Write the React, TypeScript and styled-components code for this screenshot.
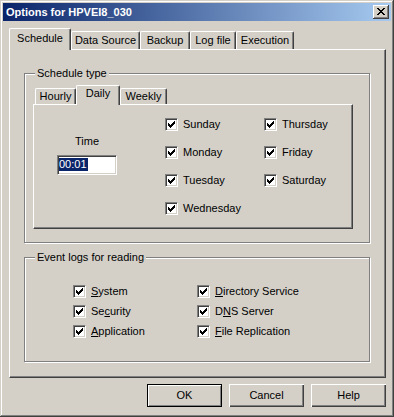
import React from "react";
import styled, { createGlobalStyle } from "styled-components";

const GlobalStyle = createGlobalStyle`
  body {
    margin: 0;
    background: #d4d0c8;
  }
`;

const FACE = "#d4d0c8";
const SHADOW = "#808080";
const DARK = "#404040";

const Window = styled.div`
  width: 394px;
  height: 417px;
  box-sizing: border-box;
  padding: 3px;
  background: ${FACE};
  box-shadow: inset -1px -1px ${DARK}, inset 1px 1px ${FACE},
    inset -2px -2px ${SHADOW}, inset 2px 2px #fff;
  font-family: "Liberation Sans", Arial, sans-serif;
  font-size: 11px;
  line-height: 13px;
  color: #000;
`;

const TitleBar = styled.div`
  height: 18px;
  display: flex;
  align-items: center;
  justify-content: space-between;
  padding: 0 2px 0 3px;
  background: linear-gradient(to right, #0a246a, #a6caf0);
  color: #fff;
  font-weight: bold;
`;

const CloseButton = styled.div`
  width: 16px;
  height: 14px;
  background: ${FACE};
  box-shadow: inset -1px -1px ${DARK}, inset 1px 1px #fff,
    inset -2px -2px ${SHADOW};
  svg {
    display: block;
  }
`;

const Body = styled.div`
  width: 377px;
  padding: 7px 0 0 6px;
`;

const TabStrip = styled.div<{ $height: number; $indent?: number }>`
  display: flex;
  align-items: flex-end;
  height: ${(p) => p.$height}px;
  padding-left: ${(p) => p.$indent || 0}px;
`;

const Tab = styled.div<{ $width: number; $height: number; $active?: boolean; $pad: number }>`
  position: relative;
  z-index: ${(p) => (p.$active ? 1 : 0)};
  width: ${(p) => p.$width}px;
  height: ${(p) => p.$height}px;
  margin-bottom: ${(p) => (p.$active ? -1 : 0)}px;
  box-sizing: border-box;
  padding-top: ${(p) => p.$pad}px;
  background: ${FACE};
  border-top: 1px solid #fff;
  border-left: 1px solid #fff;
  border-right: 1px solid ${DARK};
  border-radius: 2px 2px 0 0;
  box-shadow: inset -1px 0 ${SHADOW};
  text-align: center;
  white-space: nowrap;
`;

const Panel = styled.div<{ $width: number; $height: number }>`
  width: ${(p) => p.$width}px;
  height: ${(p) => p.$height}px;
  box-sizing: border-box;
  background: ${FACE};
  border-top: 1px solid #fff;
  border-left: 1px solid #fff;
  border-right: 1px solid ${DARK};
  border-bottom: 1px solid ${DARK};
  box-shadow: inset -1px -1px ${SHADOW};
`;

const MainPanel = styled(Panel)`
  padding: 23px 0 0 14px;
`;

const Group = styled.div<{ $height: number; $pad: string }>`
  position: relative;
  width: 346px;
  height: ${(p) => p.$height}px;
  box-sizing: border-box;
  padding: ${(p) => p.$pad};
  border: 1px solid ${SHADOW};
  box-shadow: inset 1px 1px #fff, 1px 1px #fff;
  & + & {
    margin-top: 14px;
  }
`;

const Legend = styled.span`
  position: absolute;
  top: -7px;
  left: 10px;
  padding: 0 2px;
  background: ${FACE};
`;

const InnerContent = styled.div`
  display: flex;
`;

const TimeColumn = styled.div`
  width: 60px;
  margin-left: 23px;
  padding-top: 30px;
  text-align: center;
`;

const TimeField = styled.div`
  width: 60px;
  height: 20px;
  margin-top: 7px;
  box-sizing: border-box;
  padding: 2px 0 0 1px;
  text-align: left;
  background: #fff;
  border: 1px solid;
  border-color: ${SHADOW} #fff #fff ${SHADOW};
  box-shadow: inset 1px 1px ${DARK}, inset -1px -1px ${FACE};
`;

const Selection = styled.span`
  display: inline-block;
  padding-right: 1px;
  background: #0a246a;
  color: #fff;
`;

const CheckGrid = styled.div<{ $col: number; $rows: number; $gap: number }>`
  display: grid;
  grid-auto-flow: column;
  grid-template-columns: ${(p) => p.$col}px auto;
  grid-template-rows: repeat(${(p) => p.$rows}, 13px);
  row-gap: ${(p) => p.$gap}px;
`;

const DayGrid = styled(CheckGrid)`
  margin-left: 48px;
  padding-top: 13px;
`;

const CheckRow = styled.label`
  display: flex;
  align-items: center;
  gap: 5px;
  white-space: nowrap;
`;

const Box = styled.span`
  display: inline-block;
  flex: none;
  width: 13px;
  height: 13px;
  box-sizing: border-box;
  background: #fff;
  border: 1px solid;
  border-color: ${SHADOW} #fff #fff ${SHADOW};
  box-shadow: inset 1px 1px ${DARK}, inset -1px -1px ${FACE};
  svg {
    display: block;
    margin: -1px;
  }
`;

const ButtonRow = styled.div`
  display: flex;
  justify-content: flex-end;
  gap: 7px;
  margin-top: 6px;
`;

const Button = styled.div<{ $default?: boolean }>`
  width: 75px;
  height: 23px;
  box-sizing: border-box;
  display: flex;
  align-items: center;
  justify-content: center;
  background: ${FACE};
  border: ${(p) => (p.$default ? "1px solid #000" : "none")};
  box-shadow: ${(p) =>
    p.$default
      ? `inset 1px 1px #fff, inset -1px -1px ${SHADOW}`
      : `inset 1px 1px #fff, inset -1px -1px ${DARK}, inset -2px -2px ${SHADOW}`};
`;

const checkCols: [number, number][] = [
  [3, 5], [4, 6], [5, 7], [6, 6], [7, 5], [8, 4], [9, 3],
];

function Check({ children }: { children: React.ReactNode }) {
  return (
    <CheckRow>
      <Box>
        <svg width="13" height="13" viewBox="0 0 13 13">
          {checkCols.map(([x, y]) => (
            <rect key={x} x={x} y={y} width="1" height="3" fill="#000" />
          ))}
        </svg>
      </Box>
      <span>{children}</span>
    </CheckRow>
  );
}

function CloseGlyph() {
  const rows = [0, 1, 2, 3, 4, 5, 6];
  return (
    <svg width="16" height="14" viewBox="0 0 16 14">
      {rows.map((i) => (
        <g key={i} fill="#000">
          <rect x={4 + i} y={3 + i} width="2" height="1" />
          <rect x={10 - i} y={3 + i} width="2" height="1" />
        </g>
      ))}
    </svg>
  );
}

const mainTabs = [
  { label: "Schedule", width: 62, active: true },
  { label: "Data Source", width: 69 },
  { label: "Backup", width: 50 },
  { label: "Log file", width: 46 },
  { label: "Execution", width: 58 },
];

const scheduleTabs = [
  { label: "Hourly", width: 41 },
  { label: "Daily", width: 44, active: true },
  { label: "Weekly", width: 47 },
];

const days = ["Sunday", "Monday", "Tuesday", "Wednesday", "Thursday", "Friday", "Saturday"];

export default function App() {
  return (
    <>
      <GlobalStyle />
      <Window>
        <TitleBar>
          <span>Options for HPVEI8_030</span>
          <CloseButton>
            <CloseGlyph />
          </CloseButton>
        </TitleBar>
        <Body>
          <TabStrip $height={21}>
            {mainTabs.map((t) => (
              <Tab
                key={t.label}
                $width={t.width}
                $height={t.active ? 22 : 18}
                $pad={t.active ? 3 : 2}
                $active={t.active}
              >
                {t.label}
              </Tab>
            ))}
          </TabStrip>
          <MainPanel $width={377} $height={329}>
            <Group $height={170} $pad="11px 0 0 8px">
              <Legend>Schedule type</Legend>
              <TabStrip $height={19} $indent={2}>
                {scheduleTabs.map((t) => (
                  <Tab
                    key={t.label}
                    $width={t.width}
                    $height={t.active ? 20 : 16}
                    $pad={1}
                    $active={t.active}
                  >
                    {t.label}
                  </Tab>
                ))}
              </TabStrip>
              <Panel $width={320} $height={125}>
                <InnerContent>
                  <TimeColumn>
                    Time
                    <TimeField>
                      <Selection>00:01</Selection>
                    </TimeField>
                  </TimeColumn>
                  <DayGrid $col={99} $rows={4} $gap={15}>
                    {days.map((d) => (
                      <Check key={d}>{d}</Check>
                    ))}
                  </DayGrid>
                </InnerContent>
              </Panel>
            </Group>
            <Group $height={105} $pad="27px 0 0 48px">
              <Legend>Event logs for reading</Legend>
              <CheckGrid $col={124} $rows={3} $gap={7}>
                <Check><u>S</u>ystem</Check>
                <Check>Se<u>c</u>urity</Check>
                <Check><u>A</u>pplication</Check>
                <Check><u>D</u>irectory Service</Check>
                <Check>D<u>N</u>S Server</Check>
                <Check><u>F</u>ile Replication</Check>
              </CheckGrid>
            </Group>
          </MainPanel>
          <ButtonRow>
            <Button $default>OK</Button>
            <Button>Cancel</Button>
            <Button>Help</Button>
          </ButtonRow>
        </Body>
      </Window>
    </>
  );
}
